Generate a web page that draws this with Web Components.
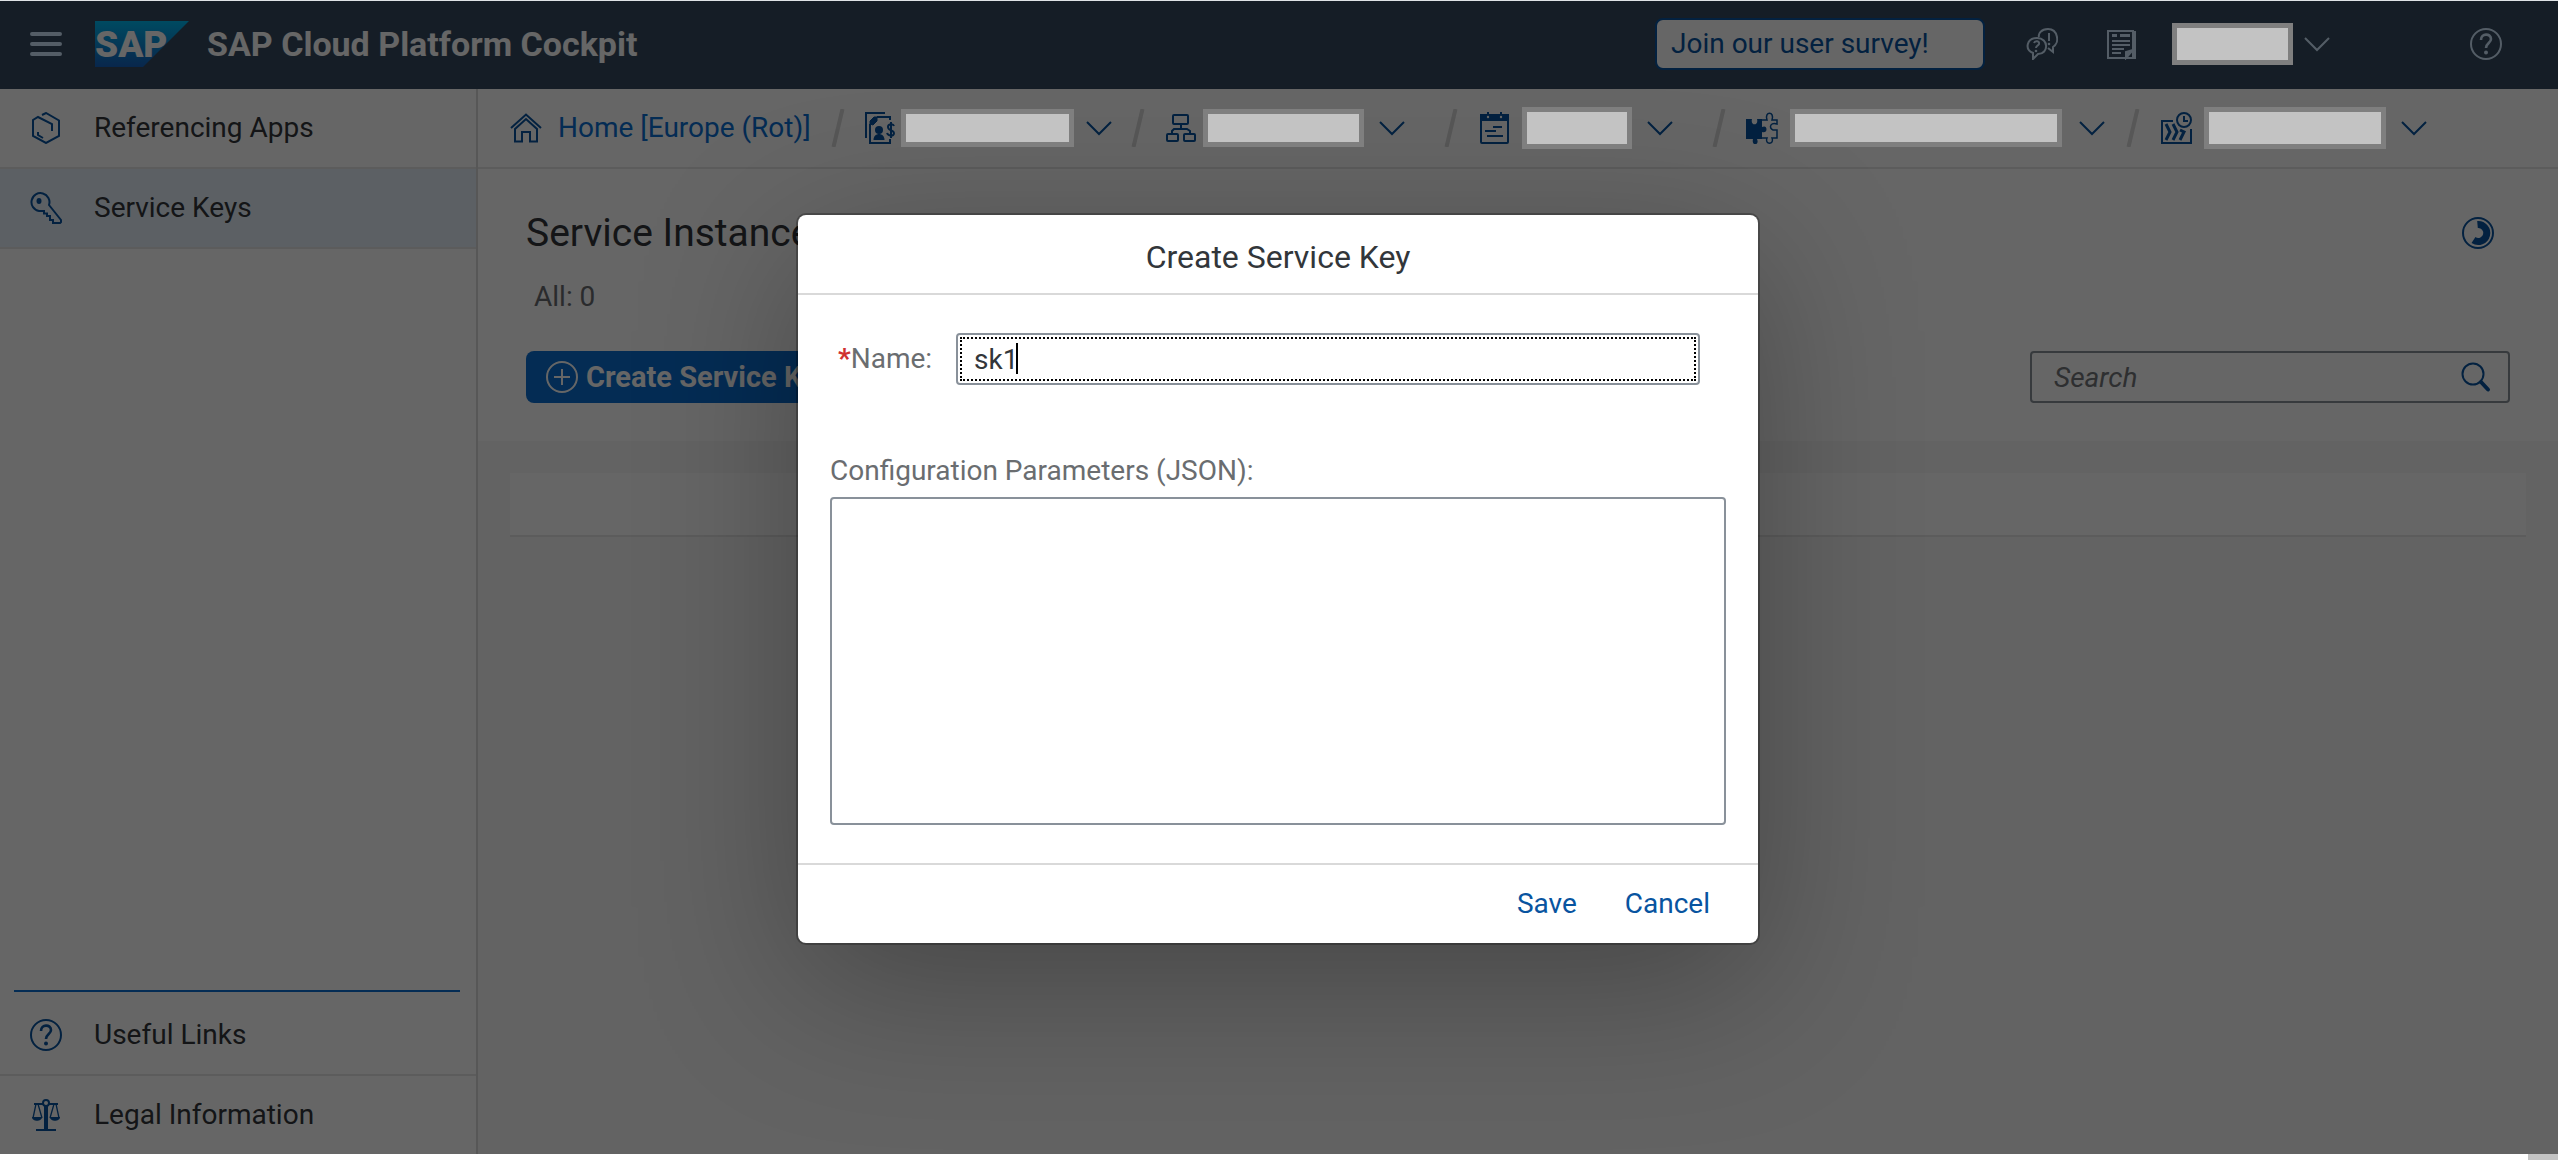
<!DOCTYPE html>
<html lang="en">
<head>
<meta charset="utf-8">
<title>SAP Cloud Platform Cockpit</title>
<style>
html, body { margin: 0; height: 100%; }
body { background: #fff; font-family: Roboto, "Liberation Sans", sans-serif; font-size: 28px; line-height: 36px; color: #32363a; }
</style>
</head>
<body>
<cockpit-app></cockpit-app>
<script>
const ICONS = {
  menu: '<g stroke-width="4" stroke-linecap="round"><path d="M2 6h28M2 16h28M2 26h28"/></g>',
  app: '<path d="M12 3l4-2 13 7.500v15.500L16 31 3 24V8l5-3 14 7v7M8 20v3l5 3"/>',
  key: '<path d="M19 13l12 15v2l-1 1h-7v-3h-3v-4h-3v-2.500h-3V19H9A9 9 0 1 1 19 13z"/><ellipse cx="9" cy="9" rx="2.500" ry="3" fill="currentColor" stroke="none"/>',
  help: '<circle cx="16" cy="16" r="15"/><path stroke-width="2.600" d="M11 12c0-7 10-7 10-1 0 4-5 4-5 9"/><circle cx="16" cy="24.500" r="2" fill="currentColor" stroke="none"/>',
  law: '<path d="M4 5h9M19 5h9"/><circle cx="16" cy="4" r="3"/><path stroke-width="4" d="M16 7v23"/><path d="M6 31h20"/><path stroke-width="1.300" d="M6 5L3 19M8 5l4 14M24 5l-4 14M26 5l3 14"/><path d="M2 18h10c0 5-10 5-10 0zM20 18h10c0 5-10 5-10 0z" fill="currentColor" stroke="none"/>',
  home: '<path d="M1 16L16 2.500 31 16M5 17v12.500h7V20h8v9.500h7V17L16 7z"/>',
  account: '<path d="M1 26V1h19M12 5h13v3M5 12v19h20v-4"/><path d="M5 12V9l4-4h3v4l-4 4z" fill="currentColor" stroke-width="1"/><circle cx="14" cy="18" r="4" fill="currentColor" stroke="none"/><path d="M8.500 28c0-8 11-8 11 0z" fill="currentColor" stroke="none"/><path d="M29 14c-1-3-6-2-6 1 0 4 6 3 6 6 0 4-6 3-7 0M26 10v16"/>',
  tree: '<rect x="8" y="3" width="15" height="9" rx="1"/><rect x="2" y="22" width="11" height="7" rx="1"/><rect x="19" y="22" width="11" height="7" rx="1"/><path d="M16 12v5M7 22v-3l2-2h13l3 2v3"/>',
  calendar: '<rect x="3" y="3" width="27" height="28" rx="1"/><path d="M3 3h27v5H3z" fill="currentColor"/><path d="M10 0v6M23 0v6M15 15h9M7 19h11M9 24h16"/><circle cx="10" cy="5" r="1.200" fill="#fff" stroke="none"/><circle cx="23" cy="5" r="1.200" fill="#fff" stroke="none"/>',
  puzzle: '<path d="M0 7h6c-2 7 7 7 5 0h5v8c6-3 6 7 0 5v7h-5c3 7-6 7-4 0H0z" fill="currentColor" stroke="none"/><path stroke-width="1.500" d="M16 8h5c-3-9 8-9 5 0h5v4c-8-3-9 7-1 6h1v8h-5c3 7-8 7-5 0h-5"/>',
  process: '<path d="M13 9H2v22h29V17"/><circle cx="24" cy="8" r="7"/><path d="M24 4v5h4"/><path stroke-width="3" d="M6 12l4 8-4 8M13 12l4 8-4 8M20 18l4 2-4 8"/>',
  chat: '<path d="M13 9C12 6 15 1 22 1c10 0 12 14 5 18v5l-5-4M11 10c12 0 12 16 1 16l-5 5v-6C-2 21 1 10 11 10z"/><path d="M8 15c1-3 6-2 5 1-1 2-3 2-3 4M23 5v8"/><circle cx="10" cy="23" r="1.300" fill="currentColor" stroke="none"/><circle cx="23" cy="16" r="1.300" fill="currentColor" stroke="none"/>',
  news: '<path d="M2 3h25v27H2zM29 3v27h-4"/><path d="M6 8h5M14 8h10M6 7h5M14 7h10M6 13h18M6 17h18M6 21h12M6 25h9"/><path d="M20 30v-6l7-2z" fill="currentColor"/>',
  chevron: '<path d="M4 10l12 12 12-12"/>',
  plus: '<circle cx="16" cy="16" r="15"/><path d="M16 8v16M8 16h16"/>',
  search: '<circle cx="13" cy="13" r="10.500"/><path stroke-width="4" stroke-linecap="round" d="M21 21l7 7.500"/>',
  busy: '<circle cx="16" cy="16" r="15"/><path d="M15.500 7.500a8.500 8.500 0 1 1-4 15.500" stroke-width="7"/>'
};

function define(name, css, html, ready) {
  customElements.define(name, class extends HTMLElement {
    constructor() {
      super();
      const root = this.attachShadow({ mode: 'open' });
      root.innerHTML = '<style>*{box-sizing:border-box}' + css + '</style>' + (typeof html === 'function' ? '' : html);
      this.base = root.innerHTML;
    }
    connectedCallback() {
      if (typeof html === 'function') this.shadowRoot.innerHTML = this.base + html(this);
      if (ready) ready(this);
    }
  });
}

define('x-icon', ':host{display:block;flex:none;width:32px;height:32px}svg{display:block;width:100%;height:100%}',
  el => '<svg viewBox="0 0 32 32" fill="none" stroke="currentColor" stroke-width="2" aria-hidden="true">' + ICONS[el.getAttribute('name')] + '</svg>');

/* Opaque block that hides a private name */
define('redacted-box', ':host{display:block;flex:none;position:relative;z-index:3;box-sizing:border-box;width:var(--w);height:var(--h,38px);border:5px solid #7f7f7f;background:#c3c3c3}', '');

define('icon-button', ':host{display:block;flex:none}button{display:block;padding:0;border:0;background:none;color:inherit;cursor:pointer}',
  el => `<button type="button" aria-label="${el.getAttribute('label')}"><x-icon name="${el.getAttribute('icon')}"></x-icon></button>`);

define('shell-bar', `
:host{display:flex;align-items:center;height:88px;padding:0 56px 2px 30px;box-sizing:border-box;background:#354a5f;color:#d1e8ff}
.logo{flex:none;width:94px;height:46px;margin:0 18px 0 33px}
h1{margin:0;font-size:34px;line-height:40px;font-weight:700;color:#fff;white-space:nowrap}
.survey{margin-left:auto;width:330px;height:52px;padding:0 14px;border:2px solid #0854a0;border-radius:8px;background:#fff;color:#0854a0;font:inherit;text-align:left;white-space:nowrap}
.tools{display:flex;align-items:center;margin-left:41px}
.tools>*+*{margin-left:48px}
.tools>redacted-box{margin-left:34px}
.tools>.drop{margin-left:8px}
.tools>.help{margin-left:137px}
`, `
<icon-button icon="menu" label="Menu"></icon-button>
<svg class="logo" viewBox="0 0 94 46" role="img" aria-label="SAP logo"><defs><linearGradient id="g" x2="0" y2="1"><stop offset="0" stop-color="#00b9f2"/><stop offset="1" stop-color="#1661be"/></linearGradient></defs><path d="M0 0h94L48 46H0z" fill="url(#g)"/><text x="0" y="36" font-family="Roboto" font-weight="900" font-size="37" fill="#fff">SAP</text></svg>
<h1>SAP Cloud Platform Cockpit</h1>
<button class="survey" type="button">Join our user survey!</button>
<div class="tools">
<icon-button icon="chat" label="Feedback"></icon-button>
<icon-button icon="news" label="News"></icon-button>
<redacted-box style="--w:121px;--h:42px"></redacted-box>
<icon-button class="drop" icon="chevron" label="User menu"></icon-button>
<icon-button class="help" icon="help" label="Help"></icon-button>
</div>`);

define('nav-item', `
:host{display:block;border-bottom:2px solid #e5e5e5}
:host([last]){border-bottom:0}
:host([selected]){background:#e5f0fa}
a{display:flex;align-items:center;gap:32px;height:78px;padding-left:30px;color:#32363a;text-decoration:none;white-space:nowrap}
x-icon{color:#0854a0}`,
  el => `<a href="#"><x-icon name="${el.getAttribute('icon')}"></x-icon><slot></slot></a>`);

define('side-nav', `
:host{display:flex;flex-direction:column;flex:none;width:478px;box-sizing:border-box;border-right:2px solid #d9d9d9;background:#fff}
.bottom{margin-top:auto}
hr{height:2px;margin:0 16px 4px 14px;border:0;background:#0a6ed1}`, `
<nav><nav-item icon="app">Referencing Apps</nav-item><nav-item icon="key" selected>Service Keys</nav-item></nav>
<div class="bottom"><hr><nav-item icon="help">Useful Links</nav-item><nav-item icon="law" last>Legal Information</nav-item></div>`);

define('crumb-item', `
:host{display:flex;align-items:center;flex:none;margin-left:var(--before,20px)}
.slash{flex:none;width:14px;height:38px;margin-right:20px;color:#d9d9d9}
redacted-box{margin:0 var(--after,12px) 0 var(--lead,12px)}`,
  el => `<svg class="slash" viewBox="0 0 14 38" aria-hidden="true"><path d="M11.500 0L2.500 38" stroke="currentColor" stroke-width="4"/></svg><x-icon name="${el.getAttribute('icon')}"></x-icon><redacted-box></redacted-box><icon-button icon="chevron" label="Switch"></icon-button>`);

define('crumb-bar', `
:host{display:flex;align-items:center;height:80px;box-sizing:border-box;padding-left:32px;border-bottom:2px solid #e5e5e5;background:#fff;color:#0854a0}
a{display:flex;align-items:center;gap:16px;color:#0a6ed1;text-decoration:none;white-space:nowrap}
a x-icon{color:#0854a0}`, `
<a href="#"><x-icon name="home"></x-icon>Home [Europe (Rot)]</a>
<crumb-item icon="account" style="--lead:4px;--w:173px;--after:9px"></crumb-item>
<crumb-item icon="tree" style="--before:16px;--lead:6px;--w:161px"></crumb-item>
<crumb-item icon="calendar" style="--before:36px;--w:110px;--h:42px"></crumb-item>
<crumb-item icon="puzzle" style="--before:36px;--w:272px;--after:14px"></crumb-item>
<crumb-item icon="process" style="--before:18px;--w:182px;--h:42px"></crumb-item>`);

define('search-field', `
:host{display:flex;align-items:center;width:480px;height:52px;box-sizing:border-box;border:2px solid #89919a;border-radius:4px;padding-right:16px;background:#fff;color:#0854a0}
input{flex:1;min-width:0;height:100%;padding:0 0 0 22px;border:0;outline:0;background:none;font:inherit;color:#32363a}
input::placeholder{color:#74777a;font-style:italic;opacity:1}`,
  `<input type="text" placeholder="Search" aria-label="Search"><icon-button icon="search" label="Start search"></icon-button>`);

define('keys-page', `
:host{display:flex;flex-direction:column;flex:1;min-width:0;background:#f7f7f7}
.head{display:flex;flex-direction:column;height:272px;padding:40px 48px 38px;background:#fff}
.row{display:flex;justify-content:space-between;align-items:center}
h2{margin:0;font-size:39px;line-height:48px;font-weight:400;white-space:nowrap}
p{margin:22px 0 0 8px;color:#6a6d70}
.tools{margin-top:auto}
.create{display:flex;align-items:center;gap:8px;height:52px;padding:0 20px;border:0;border-radius:8px;background:#0a6ed1;color:#fff;font:inherit;font-size:29px;font-weight:700;white-space:nowrap}
.busy{margin-right:16px;color:#0854a0}
.table{margin:32px;height:64px;border-bottom:2px solid #e5e5e5;background:#fff}`, `
<div class="head">
<div class="row"><h2>Service Instance: Keys</h2><x-icon class="busy" name="busy"></x-icon></div>
<p>All: 0</p>
<div class="row tools"><button class="create" type="button"><x-icon name="plus"></x-icon>Create Service Key</button><search-field></search-field></div>
</div>
<div class="table"></div>`);

define('key-dialog', `
:host{position:absolute;inset:0;z-index:2;display:flex;justify-content:center;align-items:flex-start;padding:214px 2px 0 0;background:rgba(0,0,0,.6)}
section{width:960px;max-width:100%;border-radius:8px;background:#fff;box-shadow:0 0 0 2px rgba(0,0,0,.25),0 40px 160px rgba(0,0,0,.3)}
h2{margin:0;padding:22px 0 16px;border-bottom:2px solid #d9d9d9;font-size:32px;line-height:40px;font-weight:400;text-align:center}
form{padding:38px 32px}
label{display:block;color:#6a6d70;white-space:nowrap}
.name{display:flex;align-items:center;padding:0 26px 0 8px;margin-bottom:68px}
.name label{width:118px;flex:none}
.name b{color:#d03030}
.field{position:relative;flex:1;height:52px}
input{display:block;width:100%;height:100%;padding:0 16px;border:2px solid #89919a;border-radius:4px;outline:2px dotted #000;outline-offset:-6px;font:inherit;color:#32363a;background:#fff}
.caret{position:absolute;left:60px;top:10px;width:2px;height:31px;background:#000}
textarea{display:block;width:100%;height:328px;margin-top:8px;padding:12px;border:2px solid #89919a;border-radius:4px;resize:none;font:inherit;color:#32363a}
footer{display:flex;justify-content:flex-end;gap:48px;padding:21px 48px;border-top:2px solid #d9d9d9}
footer button{padding:0;border:0;background:none;font:inherit;color:#0854a0}`, `
<section role="dialog" aria-modal="true" aria-labelledby="t">
<h2 id="t">Create Service Key</h2>
<form>
<div class="name"><label for="n"><b>*</b>Name:</label><div class="field"><input id="n" type="text" value="sk1" required><span class="caret"></span></div></div>
<label for="c">Configuration Parameters (JSON):</label>
<textarea id="c"></textarea>
</form>
<footer><button type="button">Save</button><button type="button">Cancel</button></footer>
</section>`);

define('cockpit-app', `
:host{display:flex;flex-direction:column;height:100vh;overflow:hidden}
.shell{position:relative;display:flex;flex-direction:column;flex:1;min-height:0;border-top:1px solid #dfe3e6;overflow:hidden}
.body{display:flex;flex:1;min-height:0}
main{display:flex;flex-direction:column;flex:1;min-width:0}
.strip{flex:none;display:flex;justify-content:flex-end;height:6px;background:#fff}
.strip i{width:30px;background:#c3c3c3}`, `
<div class="shell">
<shell-bar></shell-bar>
<div class="body"><side-nav></side-nav><main><crumb-bar></crumb-bar><keys-page></keys-page></main></div>
<key-dialog></key-dialog>
</div>
<div class="strip"><i></i></div>`);
</script>
</body>
</html>
